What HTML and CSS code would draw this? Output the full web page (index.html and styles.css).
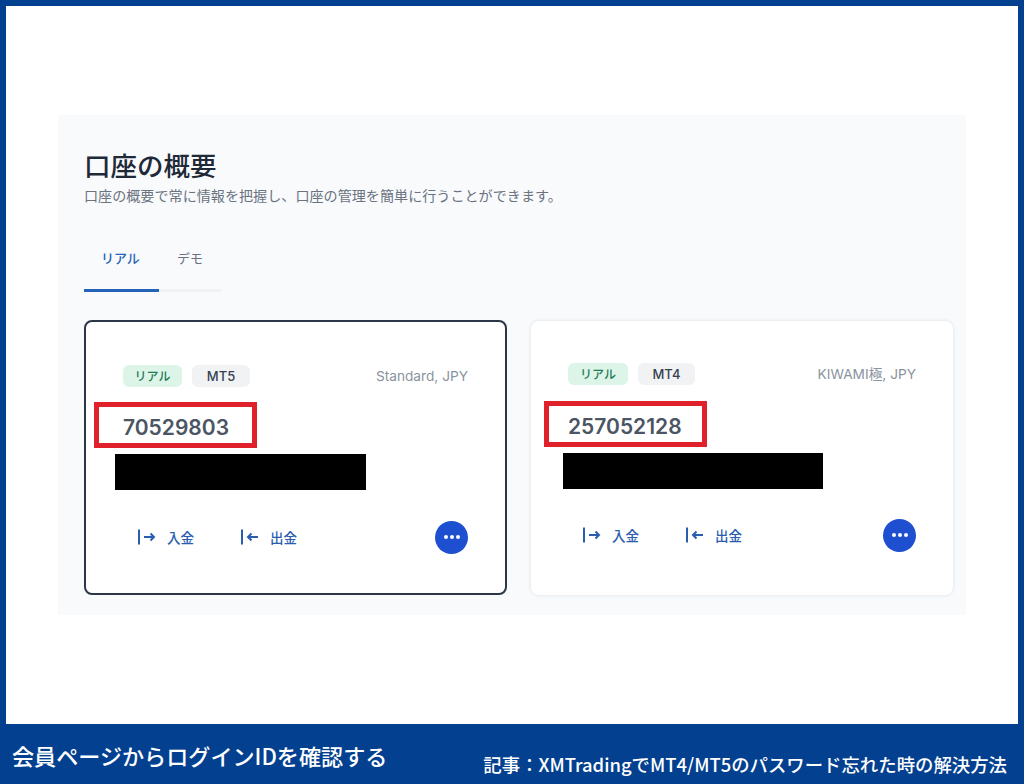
FILE: index.html
```html
<!DOCTYPE html>
<html lang="ja">
<head>
<meta charset="utf-8">
<title>口座の概要</title>
<link rel="stylesheet" href="styles.css">
</head>
<body>
<div class="frame">
  <main class="canvas">
    <section class="panel">
      <h1 class="title">口座の概要</h1>
      <p class="sub">口座の概要で常に情報を把握し、口座の管理を簡単に行うことができます。</p>
      <nav class="tabs">
        <span class="tab tab-on">リアル</span>
        <span class="tab tab-off">デモ</span>
      </nav>
      <div class="cards">
        <article class="card card-on">
          <div class="card-head">
            <span class="chip chip-green">リアル</span>
            <span class="chip chip-gray">MT5</span>
            <span class="plan">Standard, JPY</span>
          </div>
          <div class="number">70529803<span class="mark"></span></div>
          <div class="redact"></div>
          <div class="actions">
            <span class="act"><svg class="ico" viewBox="0 0 18 16"><path d="M1 .5v15M6 8h10M12.500 4.500 16 8l-3.500 3.500"/></svg>入金</span>
            <span class="act"><svg class="ico" viewBox="0 0 18 16"><path d="M1 .5v15M7 8h10M10.500 4.500 7 8l3.500 3.500"/></svg>出金</span>
            <span class="more"><i></i><i></i><i></i></span>
          </div>
        </article>
        <article class="card card-off">
          <div class="card-head">
            <span class="chip chip-green">リアル</span>
            <span class="chip chip-gray">MT4</span>
            <span class="plan">KIWAMI極, JPY</span>
          </div>
          <div class="number">257052128<span class="mark"></span></div>
          <div class="redact"></div>
          <div class="actions">
            <span class="act"><svg class="ico" viewBox="0 0 18 16"><path d="M1 .5v15M6 8h10M12.500 4.500 16 8l-3.500 3.500"/></svg>入金</span>
            <span class="act"><svg class="ico" viewBox="0 0 18 16"><path d="M1 .5v15M7 8h10M10.500 4.500 7 8l3.500 3.500"/></svg>出金</span>
            <span class="more"><i></i><i></i><i></i></span>
          </div>
        </article>
      </div>
    </section>
  </main>
  <footer class="bar">
    <span class="bar-left">会員ページからログインIDを確認する</span>
    <span class="bar-right">記事：XMTradingでMT4/MT5のパスワード忘れた時の解決方法</span>
  </footer>
</div>
</body>
</html>
```
FILE: styles.css
```css
* { box-sizing: border-box; }
html, body { margin: 0; padding: 0; }
body {
  width: 1024px;
  height: 784px;
  overflow: hidden;
  font-family: "Inter", "Noto Sans CJK JP", sans-serif;
}
.frame {
  width: 1024px;
  height: 784px;
  background: #03408f;
  display: flex;
  flex-direction: column;
  padding-top: 6px;
}
.canvas {
  height: 718px;
  margin: 0 6px;
  background: #fff;
  padding: 109px 52px 0;
}
.panel {
  width: 908px;
  height: 500px;
  background: #f8fafc;
  padding: 32px 12px 0 26px;
}
.title {
  margin: 0;
  font: 500 26.500px/36px "Noto Sans CJK JP", sans-serif;
  color: #1f2937;
}
.sub {
  margin: 2px 0 0;
  font: 400 14.100px/20px "Noto Sans CJK JP", sans-serif;
  color: #6b7280;
}
.tabs {
  display: flex;
  width: 137px;
  height: 52px;
  margin-top: 35px;
  border-bottom: 3px solid #f0f1f3;
}
.tab {
  font: 500 13px/20px "Noto Sans CJK JP", sans-serif;
  height: 52px;
  padding-top: 8px;
}
.tab-on {
  width: 75px;
  padding-left: 17px;
  color: #2563b8;
  border-bottom: 3px solid #2563b8;
}
.tab-off {
  padding-left: 18px;
  color: #6b7280;
  font-weight: 400;
}
.cards {
  display: flex;
  gap: 24px;
  margin-top: 28px;
}
.card {
  width: 423px;
  height: 275px;
  background: #fff;
  border-radius: 8px;
}
.card-on { border: 2px solid #2b3647; padding: 43px 37px 0; }
.card-off {
  width: 422px;
  height: 274px;
  margin-top: 1px;
  box-shadow: 0 0 3px 1px #e6e9ee;
  padding: 42px 37px 0;
}
.card-head {
  display: flex;
  align-items: center;
  gap: 10px;
  height: 22px;
}
.chip {
  height: 22px;
  border-radius: 6px;
  font: 500 12px/22px "Noto Sans CJK JP", sans-serif;
  text-align: center;
}
.chip-green { width: 59px; background: #dcf5e8; color: #1f7a55; }
.chip-gray { width: 58px; background: #f0f2f4; color: #374151; font-family: "Inter", sans-serif; font-size: 13px; }
.card-off .chip-green { width: 60px; }
.card-off .chip-gray { width: 57px; }
.plan {
  margin-left: auto;
  font: 400 13.700px/22px "Inter", "Noto Sans CJK JP", sans-serif;
  color: #8c93a0;
}
.number {
  position: relative;
  margin-top: 26px;
  height: 30px;
  font: 600 21px/30px "Inter", sans-serif;
  color: #4b5563;
}
.mark {
  position: absolute;
  left: -29px;
  top: -11px;
  width: 163px;
  height: 46px;
  border: 5px solid #e0202a;
}
.card-off .mark { left: -24px; top: -11px; }
.card-off .number { margin-top: 27px; }
.redact {
  width: 251px;
  height: 36px;
  margin: 11px 0 0 -8px;
  background: #000;
}
.card-off .redact { width: 260px; margin: 11px 0 0 -5px; }
.actions {
  display: flex;
  align-items: center;
  height: 34px;
  margin-top: 30px;
  padding-left: 15px;
  gap: 47px;
}
.card-off .actions { margin-top: 29px; }
.act {
  display: flex;
  align-items: center;
  gap: 11px;
  font: 500 13.500px/20px "Noto Sans CJK JP", sans-serif;
  color: #2a5db0;
}
.ico {
  width: 18px;
  height: 16px;
  fill: none;
  stroke: #2a5db0;
  stroke-width: 2;
}
.more {
  margin-left: auto;
  width: 33px;
  height: 33px;
  border-radius: 50%;
  background: #1d4fd0;
  display: flex;
  align-items: center;
  justify-content: center;
  gap: 2px;
}
.more i {
  width: 4px;
  height: 4px;
  border-radius: 50%;
  background: #fff;
}
.bar {
  height: 60px;
  display: flex;
  justify-content: space-between;
  color: #fff;
  padding: 0 17px 0 12px;
  font-family: "Noto Sans CJK JP", sans-serif;
}
.bar-left {
  font-weight: 500;
  font-size: 22.100px;
  line-height: 30px;
  margin-top: 16px;
}
.bar-right {
  font-weight: 500;
  font-size: 18.400px;
  line-height: 24px;
  margin-top: 28px;
}
```
